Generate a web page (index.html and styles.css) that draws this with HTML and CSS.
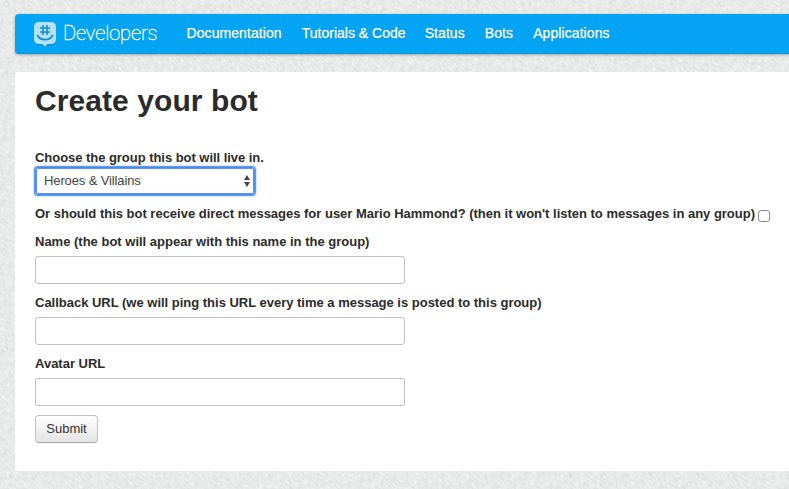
FILE: index.html
```html
<!DOCTYPE html>
<html lang="en">
<head>
<meta charset="utf-8">
<title>Create your bot</title>
<link rel="stylesheet" href="styles.css">
</head>
<body>
<svg class="texture" aria-hidden="true">
  <filter id="grain" x="0" y="0" width="100%" height="100%" color-interpolation-filters="sRGB">
    <feTurbulence type="fractalNoise" baseFrequency="0.18 0.7" numOctaves="2" seed="4"/>
    <feColorMatrix values="0.15 0 0 0 0.832  0.15 0 0 0 0.842  0.15 0 0 0 0.84  0 0 0 0 1"/>
  </filter>
  <rect x="-400" y="-500" width="1600" height="1500" filter="url(#grain)" transform="rotate(45 400 250)"/>
</svg>
<nav class="navbar">
  <a class="brand">
    <svg class="logo" width="24" height="26" viewBox="0 0 24 26">
      <path fill="#b3e3fc" d="M5 0h12q5 0 5 5v12q0 5-5 5h-3.500l-2.500 2.800L8.500 22H5q-5 0-5-5V5q0-5 5-5z"/>
      <path fill="none" stroke="#1689cd" stroke-width="1.500" d="M9 3v10M13 3v10M6 6h10M6 10h10"/>
      <path fill="none" stroke="#1689cd" stroke-width="1.700" stroke-linecap="round" d="M3.500 13.500c3 5.500 12 5.500 15 0"/>
    </svg>
    <span class="brand-name">Developers</span>
  </a>
  <a class="link docs">Documentation</a>
  <a class="link tutorials">Tutorials &amp; Code</a>
  <a class="link">Status</a>
  <a class="link">Bots</a>
  <a class="link">Applications</a>
</nav>
<main class="panel">
  <h1>Create your bot</h1>
  <form>
    <label class="label first">Choose the group this bot will live in.</label>
    <div class="select"><span>Heroes &amp; Villains</span>
      <svg width="6" height="12" viewBox="0 0 6 12"><path fill="#444" d="M3 0l3 5H0zM0 7h6l-3 5z"/></svg>
    </div>
    <div class="direct">
      <label class="label wide">Or should this bot receive direct messages for user Mario Hammond? (then it won't listen to messages in any group)</label>
      <span class="check"></span>
    </div>
    <label class="label">Name (the bot will appear with this name in the group)</label>
    <input class="field" type="text">
    <label class="label wide">Callback URL (we will ping this URL every time a message is posted to this group)</label>
    <input class="field" type="text">
    <label class="label">Avatar URL</label>
    <input class="field" type="text">
    <button class="submit" type="button">Submit</button>
  </form>
</main>
</body>
</html>
```
FILE: styles.css
```css
* { box-sizing: border-box; }
body {
  margin: 0;
  height: 489px;
  padding: 14px 0 0 15px;
  overflow: hidden;
  background: #e8eaea;
  color: #2b2b2b;
  font: 13px/18px "Liberation Sans", Arial, sans-serif;
}
.texture {
  position: absolute;
  inset: 0;
  z-index: -1;
  width: 100%;
  height: 100%;
}
.navbar {
  display: flex;
  height: 40px;
  padding-left: 19px;
  background: #03a4f3;
  border-bottom: 1px solid #0795dc;
  border-radius: 4px 0 0 4px;
  box-shadow: 0 1px 3px rgba(0, 0, 0, .3);
  color: #fff;
  white-space: nowrap;
}
.brand { display: flex; width: 152.500px; }
.logo { margin: 8px 5px 0 0; filter: drop-shadow(0 1px 0 #078bd1); }
.brand-name {
  font: 100 20px/38px Roboto, sans-serif;
  letter-spacing: -.1px;
  -webkit-text-stroke: .35px #fff;
}
.link {
  margin-right: 20px;
  font-size: 14px;
  line-height: 38px;
  letter-spacing: .08px;
  -webkit-text-stroke: .25px #fff;
  text-shadow: 0 1px 1px rgba(0, 60, 110, .25);
}
.tutorials { margin-right: 19px; letter-spacing: .01px; }
.panel {
  height: 399px;
  margin-top: 18px;
  padding: 11px 0 0 20px;
  background: #fff;
  border-radius: 3px 0 0 3px;
}
h1 { margin: 0 0 30px; font-size: 30px; line-height: 36px; letter-spacing: .08px; white-space: nowrap; }
.label { display: block; font-weight: bold; white-space: nowrap; }
.first { letter-spacing: -.04px; }
.wide { letter-spacing: -.01px; }
.select {
  display: flex;
  align-items: center;
  justify-content: space-between;
  width: 220px;
  height: 28px;
  margin: 0 0 10px;
  padding: 0 4px 0 8px;
  border: 1px solid #4388ed;
  border-radius: 3px;
  box-shadow: inset 0 0 0 1px #5c98f3, 0 0 0 1px #639cf4, 0 0 2px 1px #75a9f6;
  color: #444;
  letter-spacing: -.12px;
}
.direct { display: flex; height: 28px; }
.check {
  width: 12px;
  height: 12px;
  margin: 5px 0 0 3px;
  border: 1px solid #888;
  border-radius: 3px;
}
.field {
  display: block;
  width: 370px;
  height: 28px;
  margin: 5px 0 10px;
  border: 1px solid #c0c0c0;
  border-radius: 3px;
  background: #fff;
}
.submit {
  display: block;
  width: 63px;
  height: 28px;
  margin-top: -1px;
  padding: 0;
  border: 1px solid #c3c3c3;
  border-bottom-color: #aaa;
  border-radius: 4px;
  background: linear-gradient(#fff, #e3e3e3);
  box-shadow: 0 1px 2px rgba(0, 0, 0, .06);
  color: #333;
  font: 13px/18px "Liberation Sans", Arial, sans-serif;
}
```
